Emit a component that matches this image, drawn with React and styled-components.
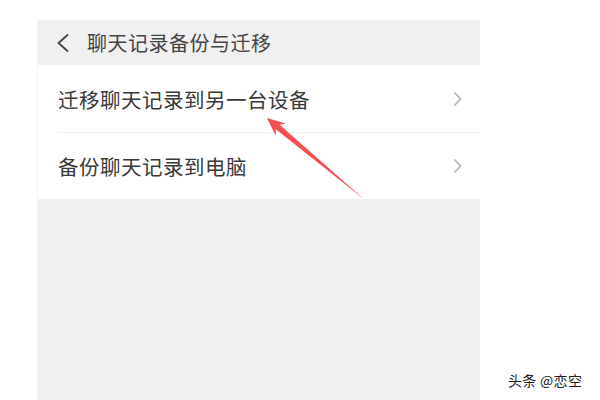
import React from "react";
import styled, { createGlobalStyle } from "styled-components";

const GlobalStyle = createGlobalStyle`
  html, body {
    margin: 0;
    padding: 0;
    background: #ffffff;
  }
  body {
    font-family: "Noto Sans CJK SC", "Noto Sans", sans-serif;
  }
`;

const Page = styled.div`
  position: relative;
  display: flex;
  width: 600px;
  height: 400px;
  overflow: hidden;
  background: #ffffff;
`;

const Gutter = styled.div`
  width: 37px;
  flex: none;
`;

const Phone = styled.div`
  width: 442px;
  flex: none;
  margin-top: 20px;
  display: flex;
  flex-direction: column;
  background: #f0f0f0;
  border-left: 1px solid #f4f4f4;
`;

const Header = styled.div`
  height: 45px;
  display: flex;
  align-items: center;
  padding-left: 18px;
  gap: 17px;
  color: #454545;
  font-size: 20px;
  letter-spacing: 0.5px;
`;

const List = styled.div`
  background: #ffffff;
  display: flex;
  flex-direction: column;
`;

const Row = styled.div`
  height: 67px;
  display: flex;
  align-items: center;
  justify-content: space-between;
  margin-left: 20px;
  padding-right: 18px;
  color: #3a3a3a;
  font-size: 20.5px;
  letter-spacing: 0.5px;
  border-top: ${(p) => (p.first ? "none" : "1px solid #f0f0f0")};
  box-sizing: border-box;
`;

const Side = styled.div`
  flex: 1;
  display: flex;
  flex-direction: column;
  justify-content: flex-end;
  padding: 0 0 10px 28px;
`;

const Credit = styled.div`
  color: #222222;
  font-size: 14px;
  line-height: 20px;
  letter-spacing: 0.3px;
  white-space: nowrap;
`;

const Overlay = styled.svg`
  position: absolute;
  left: 0;
  top: 0;
  pointer-events: none;
`;

const BackIcon = () => (
  <svg width="14" height="20" viewBox="0 0 14 20">
    <polyline
      points="12,1.5 2.5,10 12,18.5"
      fill="none"
      stroke="#444444"
      strokeWidth="1.8"
    />
  </svg>
);

const Chevron = () => (
  <svg width="9" height="16" viewBox="0 0 9 16">
    <polyline
      points="1.5,1.5 7.5,8 1.5,14.5"
      fill="none"
      stroke="#b3b3b3"
      strokeWidth="1.6"
    />
  </svg>
);

const items = ["迁移聊天记录到另一台设备", "备份聊天记录到电脑"];

export default function App() {
  return (
    <Page>
      <GlobalStyle />
      <Gutter />
      <Phone>
        <Header>
          <BackIcon />
          <span>聊天记录备份与迁移</span>
        </Header>
        <List>
          {items.map((label, i) => (
            <Row key={label} first={i === 0}>
              <span>{label}</span>
              <Chevron />
            </Row>
          ))}
        </List>
      </Phone>
      <Side>
        <Credit>头条 @恋空</Credit>
      </Side>
      <Overlay width="600" height="400" viewBox="0 0 600 400">
        <polygon
          points="267,118 285.9,123.5 279.6,124.7 365,200 275.8,129.3 275.7,135.7"
          fill="#f5504f"
        />
      </Overlay>
    </Page>
  );
}
